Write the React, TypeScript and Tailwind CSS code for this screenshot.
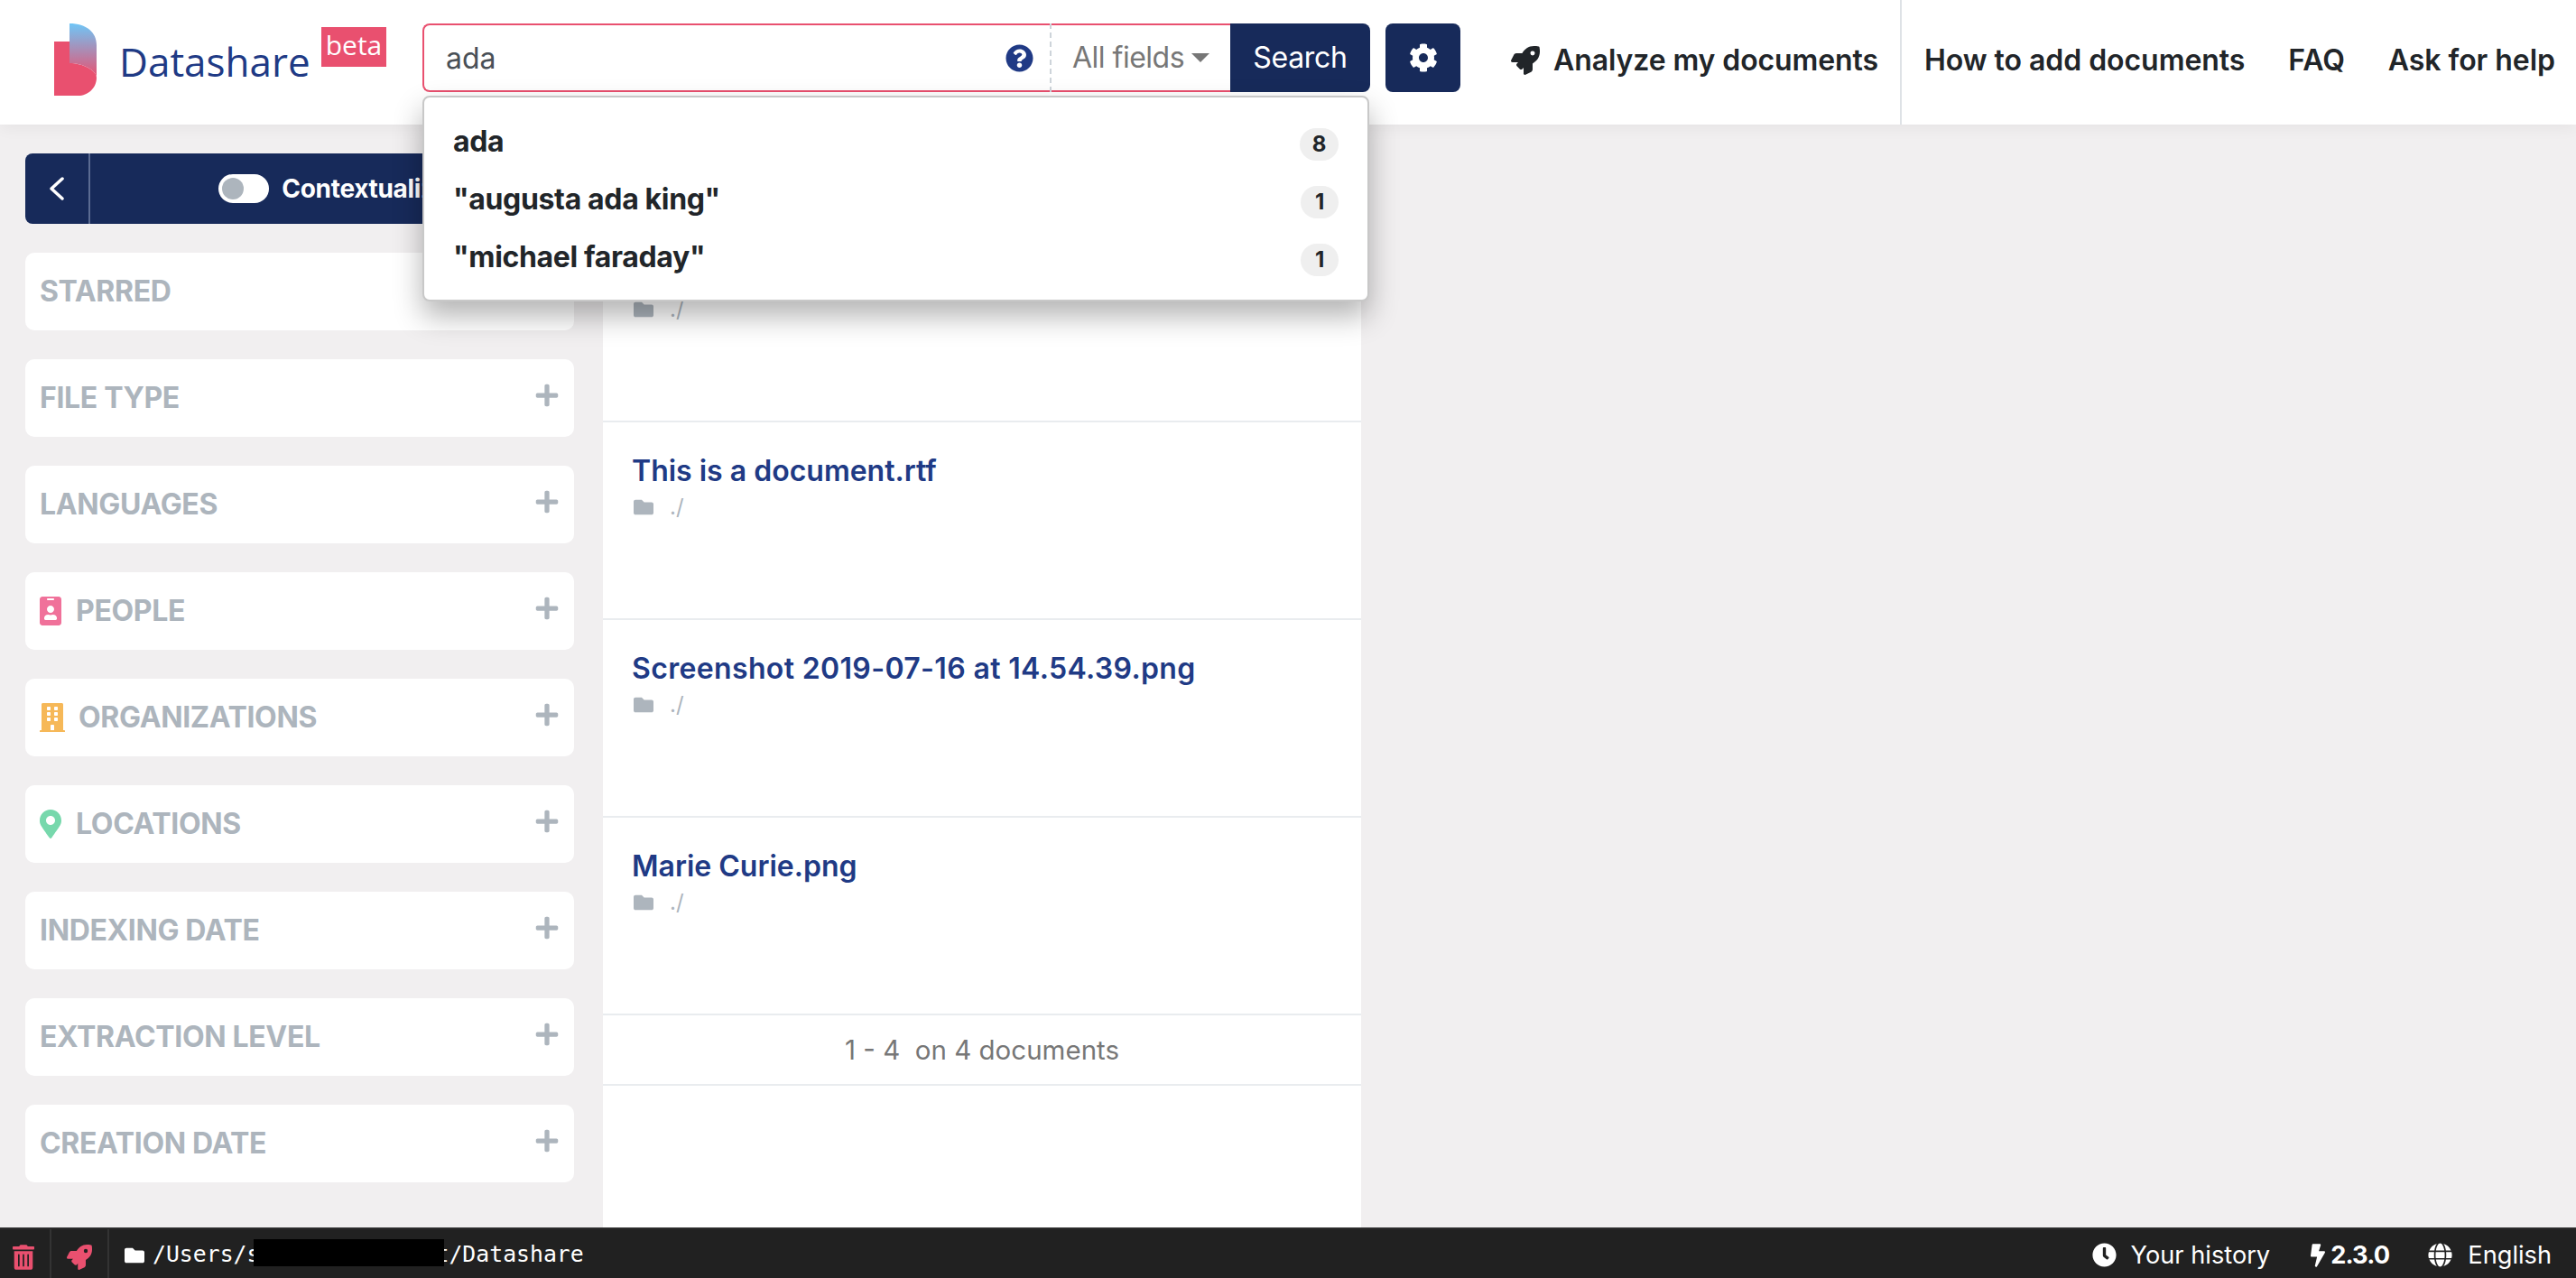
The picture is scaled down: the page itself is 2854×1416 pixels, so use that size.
import React from "react";
import { FaRocket, FaCog, FaQuestionCircle, FaClock, FaBolt, FaGlobe, FaTrashAlt, FaFolder, FaPlus, FaIdBadge, FaBuilding, FaMapMarkerAlt } from "react-icons/fa";

function Logo() {
  return (
    <svg width="47" height="80" viewBox="0 0 47 80" className="shrink-0">
      <defs>
        <linearGradient id="lg" x1="0" y1="0" x2="0" y2="1">
          <stop offset="0" stopColor="#6fc6f7" />
          <stop offset="1" stopColor="#e9506f" />
        </linearGradient>
      </defs>
      <path d="M0 20H17V44C32 44 47 52 47 60C47 72 37 80 27 80H0Z" fill="#e9506f" />
      <path d="M17 0C36 0 47 10 47 24V60C47 52 32 44 17 44Z" fill="url(#lg)" />
    </svg>
  );
}

const filters = [
  { label: "Starred" },
  { label: "File type" },
  { label: "Languages" },
  { label: "People", icon: <FaIdBadge className="w-[24px] h-[32px] text-[#f0719a] mr-[16px]" /> },
  { label: "Organizations", icon: <FaBuilding className="w-[28px] h-[32px] text-[#f6b858] mr-[15px]" /> },
  { label: "Locations", icon: <FaMapMarkerAlt className="w-[24px] h-[32px] text-[#77d8ac] mr-[16px]" /> },
  { label: "Indexing date" },
  { label: "Extraction level" },
  { label: "Creation date" },
];

const docs = [
  { t: "", c: "" },
  { t: "This is a document.rtf", c: "" },
  { t: "Screenshot 2019-07-16 at 14.54.39.png", c: "tracking-[0.35px]" },
  { t: "Marie Curie.png", c: "" },
];
const suggestions = [
  { t: "ada", n: 8 },
  { t: '"augusta ada king"', n: 1 },
  { t: '"michael faraday"', n: 1 },
];

export default function App() {
  return (
    <div className="relative w-[2854px] h-[1416px] overflow-hidden flex flex-col bg-[#f1eff0] font-['Inter',sans-serif] text-[32px] text-[#212529]">
      <header className="relative z-20 h-[138px] shrink-0 bg-white flex items-start shadow-[0_4px_16px_rgba(0,0,0,0.05)]">
        <div className="flex w-[468px] shrink-0 pl-[60px] pt-[26px]">
          <Logo />
          <span className="ml-[25px] mt-[14px] w-[210px] text-[44px] leading-[56px] text-[#203a85] font-['Open_Sans',sans-serif]">Datashare</span>
          <span className="ml-[14px] mt-[4px] h-[44px] w-[72px] bg-[#e9506f] text-white text-[30px] leading-[40px] text-center font-['Open_Sans',sans-serif]">beta</span>
        </div>

        <div className="mt-[26px] flex h-[76px] w-[1050px] shrink-0">
          <div className="flex flex-1 items-center border-2 border-r-0 border-[#e9506f] rounded-l-lg bg-white">
            <div className="flex-1 pl-[24px] pt-[2px] text-[#495057]">ada</div>
            <FaQuestionCircle className="w-[31px] h-[31px] text-[#203a85] mr-[18px]" />
            <div className="flex h-[76px] w-[200px] items-center border-l-2 border-dashed border-[#ced4da] pl-[23px] text-[#777777] tracking-[-0.5px]">
              All fields
              <span className="ml-[8px] border-x-[10px] border-t-[10px] border-x-transparent border-t-[#777777]" />
            </div>
          </div>
          <div className="flex w-[155px] items-center justify-center rounded-r-lg bg-[#172a5a] text-white tracking-[-0.3px]">Search</div>
        </div>

        <div className="ml-[17px] mt-[26px] flex h-[76px] w-[83px] items-center justify-center rounded-lg bg-[#172a5a]">
          <FaCog className="w-[32px] h-[32px] text-white" />
        </div>

        <div className="ml-[56px] flex h-[138px] w-[431px] items-center pb-[4px] font-semibold tracking-[-0.1px]">
          <FaRocket className="w-[32px] h-[32px] text-[#212529] mr-[15px]" />
          Analyze my documents
        </div>
        <div className="flex h-[138px] flex-1 items-center gap-[48px] border-l-2 border-[#dee2e6] pb-[4px] pl-[25px] font-semibold tracking-[-0.05px]">
          <span>How to add documents</span>
          <span>FAQ</span>
          <span>Ask for help</span>
        </div>
      </header>

      <main className="flex flex-1 min-h-0">
        <aside className="w-[668px] shrink-0 pl-[28px] pr-[32px] pt-[32px]">
          <div className="flex h-[78px] rounded-lg bg-[#172a5a] text-white">
            <div className="flex w-[72px] items-center justify-center border-r-2 border-[#5b6b92]">
              <svg width="18" height="26" viewBox="0 0 18 26" fill="none" stroke="white" strokeWidth="3.5" strokeLinecap="round" strokeLinejoin="round"><path d="M15 2 3 13l12 11" /></svg>
            </div>
            <div className="flex flex-1 items-center justify-center gap-[14px] pl-[4px] text-[28px] font-bold tracking-[-0.3px]">
              <span className="flex h-[32px] w-[56px] items-center rounded-full bg-white pl-[4px]">
                <span className="h-[24px] w-[24px] rounded-full bg-[#adb5bd]" />
              </span>
              Contextualize
            </div>
          </div>
          <div className="mt-[32px] flex flex-col gap-[32px]">
            {filters.map((f) => (
              <div key={f.label} className="flex h-[86px] items-center rounded-[10px] bg-white pl-[16px] pr-[16px] font-bold uppercase text-[#adb5bd] tracking-[-0.35px]">
                {f.icon}
                <span className="flex-1">{f.label}</span>
                <FaPlus className="mb-[6px] w-[28px] h-[28px] text-[#adb5bd]" />
              </div>
            ))}
          </div>
        </aside>

        <section className="w-[840px] shrink-0 bg-white pt-[111px]">
          {docs.map((d) => (
            <div key={d.t} className="h-[219px] border-b-2 border-[#e9ecef] px-[32px] pt-[34px]">
              <div className={`h-[40px] leading-[40px] font-semibold text-[#203a85] ${d.c}`}>{d.t}</div>
              <div className="mt-[2px] flex items-center text-[24px] text-[#adb5bd]">
                <FaFolder className="w-[26px] h-[22px] mr-[16px]" />
                ./
              </div>
            </div>
          ))}
          <div className="flex h-[78px] items-center justify-center whitespace-pre border-b-2 border-[#e9ecef] text-[29.5px] text-[#777777]">1 - 4  on 4 documents</div>
        </section>
      </main>

      <footer className="relative z-10 flex h-[56px] shrink-0 items-center border-t-2 border-[#2c2c2c] bg-[#212121] text-[27.2px] text-white">
        <div className="flex h-full w-[57px] items-center justify-start border-r-2 border-[#333333] pl-[14px] pt-[8px]">
          <FaTrashAlt className="w-[24px] h-[28px] text-[#e9506f]" />
        </div>
        <div className="flex h-full w-[64px] items-center justify-center border-r-2 border-[#333333] pt-[8px]">
          <FaRocket className="w-[28px] h-[28px] text-[#e9506f]" />
        </div>
        <FaFolder className="ml-[16px] mt-[4px] w-[24px] h-[22px]" />
        <div className="relative ml-[8px] mt-[2px] font-['DejaVu_Sans_Mono',monospace] text-[24.8px] whitespace-pre">
          /Users/s             t/Datashare
          <span className="absolute left-[112px] top-[2px] h-[30px] w-[211px] bg-black" />
        </div>
        <div className="ml-auto flex items-center pr-[27px] pt-[4px]">
          <FaClock className="w-[27px] h-[27px] mr-[16px]" />
          <span>Your history</span>
          <FaBolt className="ml-[45px] w-[16px] h-[28px] mr-[6px]" />
          <span className="font-bold tracking-[-0.8px]">2.3.0</span>
          <FaGlobe className="ml-[43px] w-[27px] h-[27px] mr-[17px]" />
          <span>English</span>
        </div>
      </footer>

      <div className="absolute left-[468px] top-[106px] z-30 flex h-[228px] w-[1049px] flex-col gap-[28px] rounded-lg border-2 border-[#c8c8c8] bg-white pl-[32px] pr-[32px] pt-[34px] font-bold tracking-[-0.35px] shadow-[0_16px_32px_rgba(0,0,0,0.3)]">
        {suggestions.map((s) => (
          <div key={s.t} className="flex h-[36px] items-center justify-between">
            <span className="mb-[6px]">{s.t}</span>
            <span className="flex h-[36px] min-w-[42px] items-center justify-center rounded-full bg-[#efefef] px-[14px] text-[24px]">{s.n}</span>
          </div>
        ))}
      </div>
    </div>
  );
}
